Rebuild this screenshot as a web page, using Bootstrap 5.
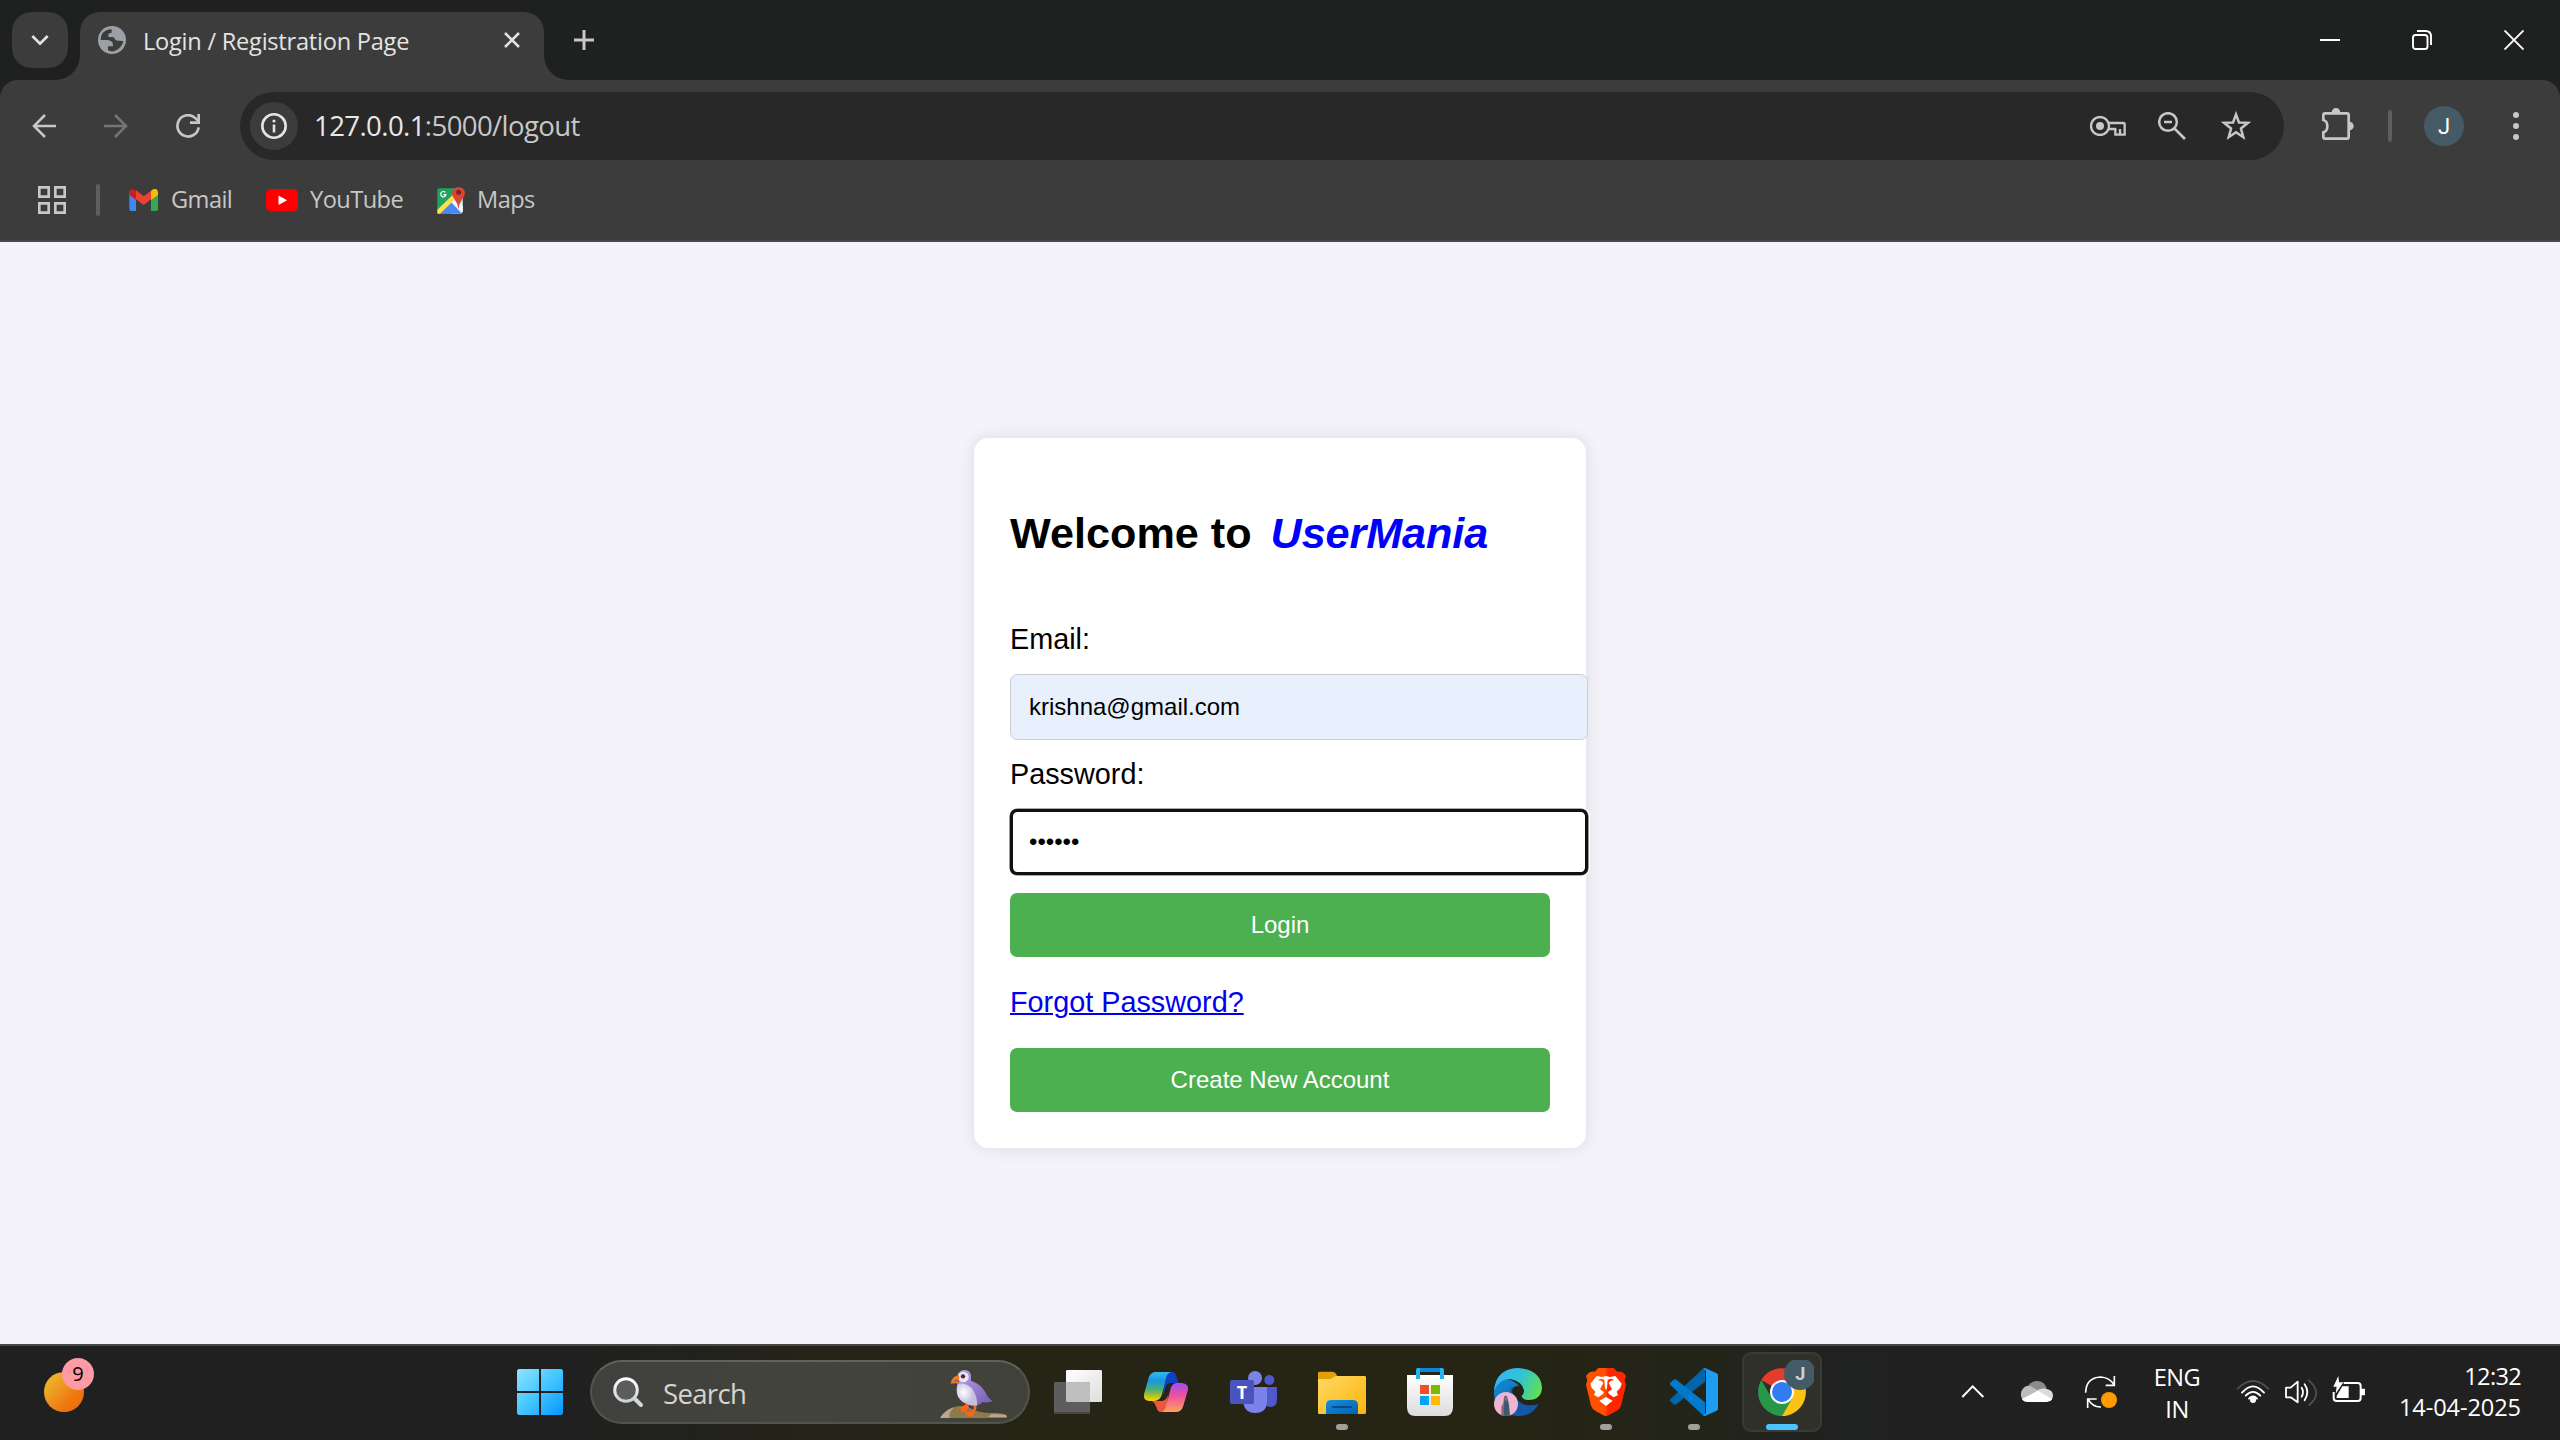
<!DOCTYPE html>
<html lang="en">
<head>
<meta charset="utf-8">
<title>Login / Registration Page</title>
<link href="https://cdn.jsdelivr.net/npm/bootstrap@5.3.0/dist/css/bootstrap.min.css" rel="stylesheet">
<style>
html,body{width:2560px;height:1440px;overflow:hidden}
body{background:#f4f3f9;font-family:"Open Sans","Noto Sans",sans-serif;line-height:1}
svg{display:block;flex:none}
.ui{white-space:nowrap;flex:none}
/* tab strip */
.tabstrip{height:80px;background:#1f2120;padding-left:12px}
.tab-list{width:56px;height:56px;border-radius:20px;background:#3c3c3c;margin-top:12px}
.tab-item{width:464px;height:68px;margin:12px 0 0 12px;background:#3c3c3c;border-radius:20px 20px 0 0;padding:0 24px 12px 18px;position:relative}
.tab-item::before,.tab-item::after{content:"";position:absolute;bottom:0;width:24px;height:24px}
.tab-item::before{left:-24px;background:radial-gradient(circle at 0 0,transparent 23.5px,#3c3c3c 24px)}
.tab-item::after{right:-24px;background:radial-gradient(circle at 100% 0,transparent 23.5px,#3c3c3c 24px)}
.tab-title{margin-left:17px;padding-top:4px;font-size:23.6px;letter-spacing:-.24px;color:#e3e3e3}
.tab-new{margin:30px 0 0 30px}
.win-btn{width:92px;height:80px}
/* toolbar */
.strip-under{background:#1f2120}
.toolbar{height:92px;background:#3c3c3c;border-radius:18px 18px 0 0;padding-left:32px}
.nav-icon + .nav-icon{margin-left:48px}
.omnibox{width:2044px;height:68px;border-radius:34px;background:#282828;margin-left:40px;padding:0 32px 0 10px}
.omnibox .zoom-icon{margin-left:32px}
.omnibox .star-icon{margin-left:34px}
.site-info{width:48px;height:48px;border-radius:50%;background:#3c3c3c}
.url{font-size:27.6px;letter-spacing:-.62px;color:#c7c7c7;margin-left:16px}
.url b{font-weight:400;color:#e8e8e8}
.ext-icon{margin-left:38px}
.vsep{width:4px;height:32px;border-radius:2px;background:#5e5e5e}
.toolbar .vsep{margin-left:34px}
.profile{width:40px;height:40px;margin-left:32px;border-radius:50%;background:#455a64;color:#fff;font:400 22px Roboto,sans-serif}
.menu-dots{margin-left:49px}
/* bookmarks */
.bookmarks{height:70px;background:#3c3c3c;border-bottom:2px solid #474747;padding:0 0 12px 38px}
.bookmarks .vsep{margin-left:30px}
.bm-item{font-size:23.6px;letter-spacing:-.55px;color:#c7c7c7;gap:12px}
.bm-mail{width:103px;margin-left:29px;gap:13px}
.bm-video{width:137px;margin-left:34px}
.bm-maps{margin-left:34px}
/* login page */
.viewport-area{height:1102px;font-family:"Liberation Sans",Arial,sans-serif;color:#000}
.login-card{width:612px;height:710px;background:#fff;border-radius:14.4px;box-shadow:0 0 18px rgba(0,0,0,.1);padding:36px}
.login-card h2{font-size:43.2px;line-height:49px;font-weight:700;margin:35px 0 65px;color:#000}
.login-card h2 em{color:#00f;margin-left:19px;letter-spacing:-.1px}
.login-card label{font-size:28.8px;line-height:33px;display:block}
.login-card .form-control{width:578px;height:66px;margin:18px 0;padding:0 18px;font-size:24px;line-height:28px;border:1px solid #ccc;border-radius:7.2px;color:#000;background:#fff}
.login-card .autofilled{background:#e8f0fe}
.login-card .pw-focus{border:3px solid #101010;padding:0 16px;box-shadow:0 0 0 .6px #555,0 0 0 2px #fff}
.login-card .btn{width:540px;height:64px;padding:0;font-size:24px;border:0;border-radius:7.2px;background:#4caf50;color:#fff;line-height:64px}
.login-card p{font-size:28.8px;line-height:33px;margin:29px 0}
.login-card p a{color:#00e;text-decoration-thickness:2px}
/* taskbar */
.taskbar{height:96px;border-top:2px solid #474747;padding:0 0 2px 44px;background:linear-gradient(90deg,#202020 0,#202020 580px,#242419 820px,#252415 1050px,#252415 1500px,#232419 1720px,#202121 1840px,#202020 100%);color:#fff}
.widget{width:50px;height:68px;margin-right:402px}
.widget .sun{left:0;top:14px;width:40px;height:40px;border-radius:50%;background:linear-gradient(135deg,#ecc535,#f0760f 70%,#ee6410)}
.widget .num{left:18px;top:0;width:32px;height:32px;border-radius:50%;background:#ff99a4;color:#000;font-size:20px}
.cell{width:88px;height:80px}
.cell .run{bottom:2px;left:38px;width:12px;height:6px;border-radius:3px;background:#a09f99}
.cell .tile{left:4px;top:0;width:80px;height:80px;border-radius:9px;background:#2f302a;border:2px solid #393a34}
.cell .active-run{bottom:2px;left:28px;width:32px;height:6px;border-radius:3px;background:#4cc2ff}
.search-pill{width:440px;height:64px;border-radius:32px;margin:0 4px 0 6px;background:linear-gradient(90deg,#404040,#43443b 45%,#404139);border:2px solid #53534d;border-top-color:#62625c;padding:0 19px 0 20px}
.search-pill .ui{font-size:27.6px;letter-spacing:-.7px;color:#d4d4d0;margin-left:19px;padding-top:3px}
.search-pill .puffin{margin-top:3px}
.tray-up{margin-left:134px}
.tray-cloud{margin-left:34px}
.tray-sync{margin-left:30px}
.tray-text{font-size:23.6px;line-height:32px;letter-spacing:-.5px}
.tray-lang{width:60px;margin:1px 29px 0}
.tray-quick{gap:14px}
.tray-clock{width:130px;margin-left:25px;line-height:31px;letter-spacing:-.1px}
.tray-clock span{letter-spacing:-.7px}
</style>
<script src="https://cdn.jsdelivr.net/npm/bootstrap@5.3.0/dist/js/bootstrap.bundle.min.js"></script>
</head>
<body>
<header>
  <div class="tabstrip d-flex">
    <div class="tab-list d-flex align-items-center justify-content-center"><svg width="20" height="14" viewBox="90 99 60 42"><path d="M97 108l23 23 23-23" fill="none" stroke="#e3e3e3" stroke-width="8"/></svg></div>
    <div class="tab-item d-flex align-items-center">
      <svg width="28" height="28" viewBox="0 0 84 84"><circle cx="42" cy="42" r="42" fill="#9aa0a6"/><path d="M38 9Q8 14 8 42H28Q45 43 45 58V61H30V73Q40 78 50 75Q72 66 76 45Q72 46 66 44Q52 46 50 38Q50 33 42 33H31V26Q32 20 41 20V12Z" fill="#3c3c3c"/></svg>
      <span class="ui tab-title">Login / Registration Page</span>
      <svg class="ms-auto" width="16" height="16" viewBox="0 0 16 16"><path d="M1 1l14 14M15 1L1 15" stroke="#e3e3e3" stroke-width="2.6"/></svg>
    </div>
    <svg class="tab-new" width="20" height="20" viewBox="0 0 20 20"><path d="M10 0v20M0 10h20" stroke="#c7c7c7" stroke-width="3"/></svg>
    <div class="d-flex ms-auto">
      <div class="win-btn d-flex align-items-center justify-content-center"><svg width="20" height="20" viewBox="0 0 20 20"><path d="M0 10h20" stroke="#fff" stroke-width="2"/></svg></div>
      <div class="win-btn d-flex align-items-center justify-content-center"><svg width="20" height="20" viewBox="0 0 20 20" fill="none" stroke="#fff" stroke-width="1.9"><rect x="1" y="5" width="14.5" height="14" rx="2.6"/><path d="M5 1H13.5Q19 1 19 6.500V15"/></svg></div>
      <div class="win-btn d-flex align-items-center justify-content-center"><svg width="20" height="20" viewBox="0 0 20 20"><path d="M.5.5l19 19M19.500.5l-19 19" stroke="#fff" stroke-width="1.9"/></svg></div>
    </div>
  </div>
  <div class="strip-under">
  <div class="toolbar d-flex align-items-center">
    <svg class="nav-icon" width="24" height="24" viewBox="96 342 72 72"><path d="M168 378H102M135 345l-33 33 33 33" fill="none" stroke="#c7c7c7" stroke-width="7.500"/></svg>
    <svg class="nav-icon" width="24" height="24" viewBox="312 342 72 72"><path d="M312 378H378M345 345l33 33-33 33" fill="none" stroke="#757575" stroke-width="7.500"/></svg>
    <svg class="nav-icon" width="24" height="24" viewBox="528 342 72 72"><path d="M596 382A32 32 0 1 1 587 355L596 364" fill="none" stroke="#c7c7c7" stroke-width="8"/><path d="M596 342V368H570" fill="none" stroke="#c7c7c7" stroke-width="8"/></svg>
    <div class="omnibox d-flex align-items-center">
      <div class="site-info d-flex align-items-center justify-content-center"><svg width="26" height="26" viewBox="0 0 26 26"><circle cx="13" cy="13" r="11.700" fill="none" stroke="#e3e3e3" stroke-width="2.600"/><path d="M13 11.500V19.500" stroke="#e3e3e3" stroke-width="2.600"/><circle cx="13" cy="8" r="1.600" fill="#e3e3e3"/></svg></div>
      <span class="ui url"><b>127.0.0.1</b>:5000/logout</span>
      <svg class="ms-auto" width="36" height="20" viewBox="150 348 108 60"><circle cx="180" cy="378" r="27" fill="none" stroke="#c7c7c7" stroke-width="7"/><circle cx="180" cy="378" r="12" fill="#c7c7c7"/><path d="M206 369H250Q254 369 254 373V404H226V387H207" fill="none" stroke="#c7c7c7" stroke-width="7" stroke-linejoin="round"/><path d="M240 404V387" stroke="#c7c7c7" stroke-width="7"/></svg>
      <svg class="zoom-icon" width="28" height="28" viewBox="354 336 84 84"><circle cx="384" cy="366" r="26.500" fill="none" stroke="#c7c7c7" stroke-width="7.500"/><path d="M372 366H396M403 385l32 32" stroke="#c7c7c7" stroke-width="8"/></svg>
      <svg class="star-icon" width="32" height="32" viewBox="540 330 96 96"><path d="M588 343l8.800 24.500 27 1-21 17 7 26-21.800-15-21.800 15 7-26-21-17 27-1z" fill="none" stroke="#c7c7c7" stroke-width="7.500"/></svg>
    </div>
    <svg class="ext-icon" width="32" height="40" viewBox="846 318 96 120"><path d="M850 345Q850 340 855 340H921Q926 340 926 345V411Q926 416 921 416H855Q850 416 850 411V397Q862 394 862 378Q862 363 850 360Z" fill="none" stroke="#c7c7c7" stroke-width="8"/><path d="M875 338a13 14 0 0 1 26 0zM928 365a13 13 0 0 1 0 26z" fill="#c7c7c7"/></svg>
    <div class="vsep"></div>
    <div class="profile d-flex align-items-center justify-content-center">J</div>
    <svg class="menu-dots" width="6" height="28" viewBox="0 0 6 28" fill="#c7c7c7"><circle cx="3" cy="3" r="3"/><circle cx="3" cy="14" r="3"/><circle cx="3" cy="25" r="3"/></svg>
  </div>
  </div>
  <nav class="bookmarks d-flex align-items-center">
    <svg width="28" height="28" viewBox="0 0 84 84" fill="none" stroke="#c7c7c7" stroke-width="8"><path d="M4 4h28v28H4zM52 4h28v28H52zM4 52h28v28H4zM52 52h28v28H52z"/></svg>
    <div class="vsep"></div>
    <div class="bm-item bm-mail d-flex align-items-center">
      <svg width="29" height="22" viewBox="388 567 87 66"><path d="M389 577V627Q389 633 395 633H409V597z" fill="#4285f4"/><path d="M454 597V633H469Q475 633 475 627V577z" fill="#34a853"/><path d="M454 573V600l21-15V577Q474 562 458 569z" fill="#fbbc04"/><path d="M409 570v28l23 17 22-17V572l-22 17z" fill="#ea4335"/><path d="M389 577v8l20 15V572Q392 560 389 577" fill="#c5221f"/></svg>
      <span class="ui">Gmail</span>
    </div>
    <div class="bm-item bm-video d-flex align-items-center">
      <svg width="32" height="23" viewBox="0 0 32 23"><rect width="32" height="22.500" rx="5" fill="red"/><path d="M12.500 6.500v9.600l8.500-4.800z" fill="#fff"/></svg>
      <span class="ui">YouTube</span>
    </div>
    <div class="bm-item bm-maps d-flex align-items-center">
      <svg width="28" height="30" viewBox="1311 552 84 90"><rect x="1312" y="562" width="76" height="76" rx="6" fill="#1ea362"/><path d="M1350 600l38-34v66l-6 6h-30z" fill="#e8e8e8"/><path d="M1318 638l34-36 34 36z" fill="#4a89f3"/><path d="M1312 626l52-50 8 12-52 50h-8z" fill="#ffe047"/><path d="M1358 604l12-10 18 22v18z" fill="#fff"/><path d="M1375 624Q1373 606 1363 594Q1356 585 1356 574A20 20 0 0 1 1395 574Q1395 585 1387 594Q1378 606 1375 624" fill="#db4437"/><circle cx="1376" cy="574" r="7.500" fill="#7b231c"/><path d="M1336 574A8 8 0 1 0 1338 581H1330" fill="none" stroke="#fff" stroke-width="3.500"/></svg>
      <span class="ui">Maps</span>
    </div>
  </nav>
</header>

<main class="viewport-area d-flex align-items-center justify-content-center">
  <form class="login-card">
    <h2 class="text-nowrap">Welcome to<em>UserMania</em></h2>
    <label for="email">Email:</label>
    <input id="email" class="form-control autofilled" value="krishna@gmail.com">
    <label for="pw">Password:</label>
    <input id="pw" class="form-control pw-focus" value="••••••">
    <button type="button" class="btn d-block">Login</button>
    <p><a href="#">Forgot Password?</a></p>
    <button type="button" class="btn d-block">Create New Account</button>
  </form>
</main>

<footer class="taskbar d-flex align-items-center">
  <div class="widget position-relative"><div class="sun position-absolute"></div><div class="num position-absolute d-flex align-items-center justify-content-center">9</div></div>
  <div class="cell d-flex align-items-center justify-content-center"><svg width="46" height="46" viewBox="0 0 46 46"><defs><linearGradient id="w" gradientUnits="userSpaceOnUse" x1="0" y1="0" x2="46" y2="46"><stop offset="0" stop-color="#8fe3ff"/><stop offset=".5" stop-color="#44c6ff"/><stop offset="1" stop-color="#0695ff"/></linearGradient></defs><path d="M1.500 0H22v22H0V1.500zM24 0H44.500L46 1.500V22H24zM0 24H22V46H1.500L0 44.500zM24 24H46V44.500L44.500 46H24z" fill="url(#w)"/></svg></div>
  <div class="search-pill d-flex align-items-center">
    <svg width="32" height="32" viewBox="0 0 32 32"><defs><linearGradient id="mg" x1="0" y1="0" x2="0" y2="1"><stop offset="0" stop-color="#fff"/><stop offset="1" stop-color="#c9d2d6"/></linearGradient></defs><path d="M22 22l7 7" stroke="#d0d8dc" stroke-width="4" stroke-linecap="round"/><circle cx="14" cy="14" r="11.300" fill="#5c5c5c" stroke="url(#mg)" stroke-width="3"/></svg>
    <span class="ui">Search</span>
    <svg class="puffin ms-auto" width="70" height="51" viewBox="1078 99 210 153"><defs><linearGradient id="pu" x1="0" y1="0" x2="1" y2="1"><stop offset="0" stop-color="#b6a5e8"/><stop offset="1" stop-color="#7459b4"/></linearGradient><radialGradient id="pb" cx=".35" cy=".4"><stop offset="0" stop-color="#fff"/><stop offset="1" stop-color="#c5bfdf"/></radialGradient></defs><path d="M1081 249Q1096 224 1125 216Q1148 208 1178 222Q1205 236 1240 234Q1276 233 1282 242L1280 249Z" fill="#8f7a4a"/><path d="M1081 249Q1096 224 1125 216Q1105 232 1110 249zM1235 238Q1270 236 1280 242L1282 246H1225z" fill="#c0a493"/><path d="M1134 118Q1142 104 1158 105Q1176 108 1174 130V137Q1205 148 1217 172Q1226 192 1240 199Q1226 204 1209 201Q1195 214 1180 212Q1150 206 1133 180Q1130 160 1136 146Z" fill="url(#pu)"/><path d="M1134 146Q1160 142 1176 160Q1194 182 1192 212Q1170 215 1150 202Q1130 186 1131 165Q1131 152 1134 146" fill="url(#pb)"/><ellipse cx="1151" cy="126" rx="16" ry="16" fill="#e9e5f4"/><circle cx="1150" cy="124" r="6.500" fill="#5f2330"/><path d="M1138 121Q1117 122 1113 146Q1126 144 1136 146Q1141 132 1138 121" fill="#f47a20"/><path d="M1125 139Q1132 133 1137 141" stroke="#5968a8" stroke-width="4" fill="none"/><path d="M1158 207L1152 212 1138 219 1146 223 1143 233 1153 228 1160 238 1162 226 1168 217 1166 208zM1182 212V224L1170 230 1157 238 1164 241 1163 247 1174 242 1182 247 1183 232 1190 222V212z" fill="#ff641c"/></svg>
  </div>
  <div class="cell d-flex align-items-center justify-content-center"><svg width="48" height="48" viewBox="72 99 144 144"><defs><linearGradient id="tv" x1="0" y1="0" x2="1" y2="1"><stop offset="0" stop-color="#fff"/><stop offset="1" stop-color="#dedede"/></linearGradient></defs><rect x="108" y="105" width="108" height="96" rx="4" fill="url(#tv)"/><rect x="72" y="141" width="108" height="96" rx="4" fill="#5d5d5d"/><path d="M108 141h68q4 0 4 4v56h-68q-4 0-4-4z" fill="#bfbfbd"/><path d="M72 231h108v2q0 4-4 4H76q-4 0-4-4z" fill="#464646"/></svg></div>
  <div class="cell d-flex align-items-center justify-content-center"><svg width="48" height="48" viewBox="336 99 144 144"><defs><linearGradient id="c1" x1="0" y1="0" x2="0" y2="1"><stop offset="0" stop-color="#35b8f0"/><stop offset=".3" stop-color="#1698e0"/><stop offset=".62" stop-color="#4fb26a"/><stop offset=".95" stop-color="#f5cb05"/></linearGradient><linearGradient id="c2" x1="0" y1="0" x2="0" y2="1"><stop offset="0" stop-color="#a04df0"/><stop offset=".45" stop-color="#f0529a"/><stop offset="1" stop-color="#ffa35c"/></linearGradient></defs><path d="M405 111H428Q437 113 440 128Q443 141 449 144H428Q412 143 408 153L398 186z" fill="#1240c4"/><path d="M372 198H398Q408 196 414 180L410 222Q404 232 390 231Q382 230 378 214Q376 204 366 198" fill="#ee5540"/><path d="M378 111H424Q412 114 409 126L396 178Q391 198 372 198H356Q339 196 342 178L356 128Q361 111 378 111" fill="url(#c1)"/><path d="M440 144H456Q476 146 474 164L460 212Q454 231 438 231H392Q404 229 407 216L421 164Q426 144 440 144" fill="url(#c2)"/></svg></div>
  <div class="cell d-flex align-items-center justify-content-center"><svg width="48" height="48" viewBox="600 99 144 144"><circle cx="718" cy="135" r="15" fill="#5059c9"/><path d="M706 156h32q3 0 3 3v34q0 23-20 23-14 0-15-12z" fill="#5059c9"/><circle cx="675" cy="129" r="21" fill="#7b83eb"/><path d="M640 156h68q3 0 3 4v38q0 36-35 36t-36-36z" fill="#7b83eb"/><rect x="600" y="135" width="72" height="72" rx="5" fill="#4b53bc"/><text x="636" y="191" font-family="Open Sans,sans-serif" font-weight="700" font-size="54" fill="#fff" text-anchor="middle">T</text></svg></div>
  <div class="cell position-relative d-flex align-items-center justify-content-center"><svg width="48" height="48" viewBox="864 99 144 144"><defs><linearGradient id="fo" x1="0" y1="0" x2="1" y2="1"><stop offset="0" stop-color="#ffd765"/><stop offset="1" stop-color="#fbb60b"/></linearGradient><linearGradient id="fb" x1="0" y1="0" x2="1" y2="1"><stop offset="0" stop-color="#1390df"/><stop offset="1" stop-color="#0560ad"/></linearGradient></defs><path d="M864 114q0-4 4-4h38q8 0 12 6l8 16-30 14h-32z" fill="#e0a008"/><path d="M864 132h34q6 0 10-4l4-3q3-2 6-2h86q4 0 4 4v106q0 4-4 4H868q-4 0-4-4z" fill="url(#fo)"/><path d="M888 237v-26q0-16 16-16h64q16 0 16 16v26z" fill="url(#fb)"/><path d="M909 216h54" stroke="#06498c" stroke-width="6" stroke-linecap="round"/></svg><div class="run position-absolute"></div></div>
  <div class="cell d-flex align-items-center justify-content-center"><svg width="48" height="48" viewBox="-42 99 144 144"><defs><linearGradient id="st" x1="0" y1="0" x2="0" y2="1"><stop offset="0" stop-color="#fff"/><stop offset="1" stop-color="#dcdcdc"/></linearGradient></defs><path d="M-39 120H99V216Q99 243 74 243H-14Q-39 243 -39 216z" fill="url(#st)"/><path d="M-6 132V105H66V132" fill="none" stroke="#22b5f0" stroke-width="12" stroke-linejoin="round"/><path d="M0 105H60" stroke="#0a84e0" stroke-width="12"/><path d="M0 150h27v27H0z" fill="#f25022"/><path d="M33 150h27v27H33z" fill="#7fba00"/><path d="M0 183h27v27H0z" fill="#00a4ef"/><path d="M33 183h27v27H33z" fill="#ffb900"/></svg></div>
  <div class="cell d-flex align-items-center justify-content-center"><svg width="48" height="48" viewBox="222 99 144 144"><defs><linearGradient id="e1" x1="0" y1=".3" x2="1" y2=".6"><stop offset="0" stop-color="#35b5ee"/><stop offset=".5" stop-color="#2fc4d8"/><stop offset="1" stop-color="#62df50"/></linearGradient><linearGradient id="e2" x1="0" y1="0" x2="1" y2="1"><stop offset="0" stop-color="#1290dc"/><stop offset="1" stop-color="#134a92"/></linearGradient></defs><path d="M222 172Q226 120 270 134Q300 146 306 170Q280 190 290 208Q320 224 355 206Q338 243 294 243Q222 240 222 172" fill="url(#e2)"/><path d="M274 158Q262 180 272 204Q290 246 320 238Q346 228 355 206Q330 216 308 206Q282 190 290 165Q282 156 274 158" fill="#1357a8"/><path d="M276 166Q280 152 296 153Q308 156 312 166Q311 176 305 180Q306 194 326 196Q345 196 356 185L364 196 355 207Q330 214 308 206Q278 190 276 166" fill="#242416"/><path d="M222 168Q226 102 294 99Q362 104 366 158Q364 194 326 195Q306 194 305 182Q313 176 312 166Q306 138 270 132Q238 130 222 168" fill="url(#e1)"/><circle cx="258" cy="207" r="36" fill="#efb4d2"/><path d="M252 186q3-6 9-2l3 12 3 14 3 32-14 1-10-2 3-22z" fill="#3f5a70"/><path d="M252 188l7-6 4 12-7 6zM244 214l7-10 1 36h-8z" fill="#8e6a72"/></svg></div>
  <div class="cell position-relative d-flex align-items-center justify-content-center"><svg width="48" height="48" viewBox="486 99 144 144"><defs><linearGradient id="br"><stop offset=".48" stop-color="#ff5000"/><stop offset=".55" stop-color="#ff2600"/></linearGradient></defs><path d="M535 99H581L592 110Q607 107 618 123L614 136 618 149 603 212Q600 222 588 229L566 241Q558 245 550 241L528 229Q516 222 513 212L498 149 502 136 498 123Q509 107 524 110Z" fill="url(#br)"/><path d="M530 123L546 126 558 123 570 126 586 123 605 146 601 158 590 170 594 180 581 187 567 177 564 171 576 163 566 144 572 137 583 135 573 131 563 134 561 158 558 166 555 158 553 134 543 131 533 135 544 137 550 144 540 163 552 171 549 177 535 187 522 180 526 170 515 158 511 146ZM558 186L578 197 558 213 538 197Z" fill="#fff"/></svg><div class="run position-absolute"></div></div>
  <div class="cell position-relative d-flex align-items-center justify-content-center"><svg width="48" height="48" viewBox="750 99 144 144"><path d="M855 99V140L769 208Q765 211 761 208L751 199Q748 195 752 191L848 102z" fill="#0065a9"/><path d="M855 243V202L769 134Q765 131 761 134L751 143Q748 147 752 151L848 240z" fill="#007acc"/><path d="M855 99L890 115Q894 117 894 121V221Q894 225 890 227L855 243Q851 243 848 240Q858 240 858 232V110Q858 102 848 102Z" fill="#1f9cf0"/></svg><div class="run position-absolute"></div></div>
  <div class="cell position-relative d-flex align-items-center justify-content-center"><div class="tile position-absolute"></div><svg class="position-relative" width="64" height="64" viewBox="990 75 192 192"><path d="M1086 171L1024 135A72 72 0 0 1 1148 135z" fill="#e33b2e"/><path d="M1024 135A72 72 0 0 0 1086 243L1117 189 1086 171 1055 189z" fill="#279847"/><path d="M1148 135A72 72 0 0 1 1086 243L1117 189V135z" fill="#fcc314"/><circle cx="1086" cy="171" r="36" fill="#fff"/><circle cx="1086" cy="171" r="30" fill="#2f7df0"/><circle cx="1140" cy="117" r="48" fill="#455a67"/><text x="1141" y="136" font-family="Roboto,sans-serif" font-weight="700" font-size="54" fill="#c9d3d8" text-anchor="middle">J</text></svg><div class="active-run position-absolute"></div></div>

  <svg class="tray-up" width="26" height="40" viewBox="60 81 78 120"><path d="M67 156l31-32 32 32" fill="none" stroke="#fff" stroke-width="6"/></svg>
  <svg class="tray-cloud" width="34" height="40" viewBox="240 81 102 120"><path d="M264 124Q272 108 292 108Q314 109 320 130L290 150z" fill="#8b8b8b"/><path d="M247 163Q238 146 248 132Q258 119 272 124L312 146 252 168z" fill="#bdbdbd"/><path d="M290 138Q300 129 318 131Q340 135 339 152Q338 164 330 168L285 145z" fill="#dcdcdc"/><path d="M246 162L294 137 336 163Q330 171 321 171H262Q251 171 246 162" fill="#fff"/></svg>
  <svg class="tray-sync" width="34" height="40" viewBox="432 81 102 120"><g fill="none" stroke="#fff" stroke-width="5"><path d="M437 143Q438 98 482 96Q508 97 522 119M523 93V121H497"/><path d="M443 189V162H470M445 164Q458 187 483 186"/></g><circle cx="507" cy="165" r="24" fill="#ff9a00"/></svg>
  <div class="ui tray-text tray-lang text-center">ENG<br>IN</div>
  <div class="tray-quick d-flex">
    <svg width="34" height="40" viewBox="888 81 102 120"><g fill="none" stroke="#fff" stroke-width="5.500" stroke-linecap="round"><path d="M893 131Q939 85 985 131" stroke="#4f4f4f"/><path d="M906 143Q939 105 972 143M917 152Q939 129 961 152"/><path d="M927 161Q939 148 951 161"/></g><circle cx="939" cy="165" r="9" fill="#fff"/></svg>
    <svg width="34" height="40" viewBox="1032 81 102 120"><g fill="none" stroke="#fff" stroke-width="5.500" stroke-linejoin="round" stroke-linecap="round"><path d="M1038 128H1052L1073 110V172L1052 157H1038z"/><path d="M1085 128Q1093 141 1085 155M1094 118Q1110 141 1094 166"/><path d="M1106 106Q1150 143 1108 180" stroke="#4f4f4f"/></g></svg>
    <svg width="34" height="40" viewBox="1176 81 102 120"><path d="M1211 114H1253Q1262 114 1262 123V159Q1262 168 1253 168H1190Q1181 168 1181 159V141" fill="none" stroke="#fff" stroke-width="6"/><path d="M1262 131h11q2 0 2 3v14q0 3-2 3h-11zM1207 124H1226V159H1190L1190 153z" fill="#fff"/><path d="M1195 93L1180 125H1190L1187 146 1210 112H1197z" fill="#fff"/></svg>
  </div>
  <div class="ui tray-text tray-clock text-end"><span>12:32</span><br>14-04-2025</div>
</footer>
</body>
</html>
